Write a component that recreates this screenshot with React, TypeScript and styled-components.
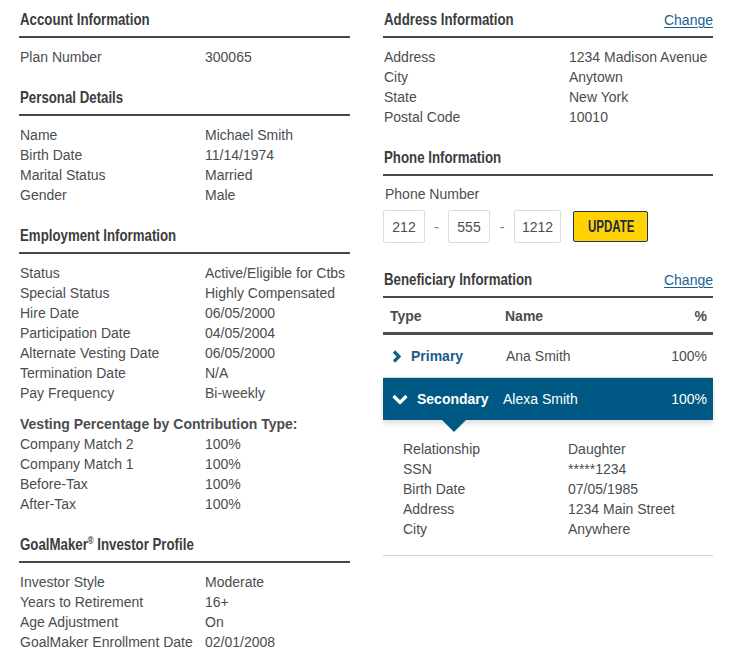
import React from "react";
import styled, { createGlobalStyle } from "styled-components";

const Global = createGlobalStyle`
  html, body { margin: 0; padding: 0; background: #fff; }
  body { font-family: "Liberation Sans", Arial, sans-serif; color: #444; }
  * { box-sizing: border-box; }
`;

const Page = styled.div`
  display: grid;
  grid-template-columns: 331px 330px;
  column-gap: 33px;
  padding: 10px 17px 0 19px;
  width: 730px;
  height: 667px;
  overflow: hidden;
`;

const Column = styled.div`
  display: flex;
  flex-direction: column;
`;

const Section = styled.section<{ $gap?: number }>`
  margin-bottom: ${(p) => (p.$gap ?? 21)}px;
`;

const HeadingBar = styled.div`
  display: flex;
  justify-content: space-between;
  align-items: baseline;
  padding-bottom: 6px;
  border-bottom: 2px solid #45494e;
`;

const Heading = styled.h2`
  margin: 0 0 0 1px;
  font-family: "Liberation Sans", Arial, sans-serif;
  font-weight: 700;
  font-size: 17px;
  line-height: 20px;
  color: #3a3d40;
  white-space: nowrap;
  sup {
    font-size: 10px;
    line-height: 0;
    vertical-align: 6px;
  }
`;

/* emulates the condensed bold face of the original */
const Narrow = styled.span<{ $scale?: number }>`
  display: inline-block;
  transform: scaleX(${(p) => p.$scale ?? 0.78});
  transform-origin: left center;
`;

const ChangeLink = styled.a`
  font-family: "Liberation Sans", Arial, sans-serif;
  font-size: 14px;
  line-height: 20px;
  color: #1d5f8e;
  text-decoration: underline;
  text-underline-offset: 2px;
  cursor: pointer;
`;

const Rows = styled.dl<{ $labelWidth?: number; $indent?: number }>`
  display: grid;
  grid-template-columns: ${(p) => p.$labelWidth ?? 185}px 1fr;
  margin: ${(p) => (p.$indent ? 0 : 9)}px 0 0 ${(p) => p.$indent ?? 1}px;
  font-size: 14px;
  line-height: 20px;
  color: #4a4d50;
  dt, dd { margin: 0; white-space: nowrap; }
`;

const SubTitle = styled.div`
  margin: 11px 0 0 1px;
  font-weight: 700;
  font-size: 14px;
  line-height: 20px;
  color: #4a4d50;
`;

const FieldLabel = styled.div`
  margin: 8px 0 0 2px;
  font-size: 14px;
  line-height: 20px;
  color: #4a4d50;
`;

const PhoneRow = styled.div`
  display: flex;
  align-items: center;
  margin-top: 6px;
`;

const PhoneBox = styled.div<{ $w: number }>`
  width: ${(p) => p.$w}px;
  height: 33px;
  border: 1px solid #dcdcdc;
  border-radius: 2px;
  display: flex;
  align-items: center;
  justify-content: center;
  font-size: 14px;
  color: #4a4d50;
`;

const Dash = styled.span<{ $w: number }>`
  width: ${(p) => p.$w}px;
  text-align: center;
  font-size: 14px;
  color: #777;
`;

const UpdateButton = styled.button`
  margin-left: 12px;
  width: 75px;
  height: 31px;
  background: #ffd200;
  border: 1px solid #1f3556;
  border-radius: 2px;
  font-family: "Liberation Sans", Arial, sans-serif;
  font-weight: 700;
  font-size: 16px;
  color: #1c2b48;
  padding: 1px 0 0 14px;
  text-align: left;
  white-space: nowrap;
`;

const Table = styled.div`
  display: flex;
  flex-direction: column;
`;

const TRow = styled.div<{ $variant: "head" | "plain" | "active" }>`
  position: relative;
  display: grid;
  grid-template-columns: 115px 1fr 60px;
  align-items: center;
  height: ${(p) => (p.$variant === "head" ? 37 : p.$variant === "plain" ? 43 : 42)}px;
  padding: ${(p) => (p.$variant === "head" ? "2px 6px 0 7px" : "0 6px 0 9px")};
  font-size: 14px;
  color: ${(p) => (p.$variant === "active" ? "#fff" : "#4a4d50")};
  background: ${(p) => (p.$variant === "active" ? "#005984" : "transparent")};
  border-bottom: ${(p) =>
    p.$variant === "head" ? "3px solid #4a4d51" : p.$variant === "plain" ? "1px solid #d4d4d4" : "none"};
  box-shadow: ${(p) => (p.$variant === "active" ? "0 4px 5px rgba(0,0,0,0.12)" : "none")};
  font-weight: ${(p) => (p.$variant === "head" ? 700 : 400)};
`;

const TypeCell = styled.div<{ $active?: boolean }>`
  display: flex;
  align-items: center;
  gap: ${(p) => (p.$active ? 9 : 10)}px;
  font-weight: 700;
  color: ${(p) => (p.$active ? "#fff" : "#1a5c8a")};
`;

const HeadCell = styled.div``;

const NameCell = styled.div<{ $shift?: number }>`
  margin-left: ${(p) => p.$shift ?? 0}px;
`;

const PctCell = styled.div`
  text-align: right;
`;

const Pointer = styled.div`
  position: absolute;
  left: 59px;
  top: 100%;
  width: 0;
  height: 0;
  border-left: 12px solid transparent;
  border-right: 12px solid transparent;
  border-top: 12px solid #005984;
  z-index: 2;
`;

const Details = styled.div`
  padding: 19px 0 16px 0;
  border-bottom: 1px solid #cfcfcf;
`;

const ChevronRight = () => (
  <svg width="9" height="13" viewBox="0 0 9 13">
    <polyline points="2,1.5 7,6.5 2,11.5" fill="none" stroke="#1a5c8a" strokeWidth="3.2" />
  </svg>
);

const ChevronDown = () => (
  <svg width="16" height="11" viewBox="0 0 16 11">
    <polyline points="1.5,2 8,8.5 14.5,2" fill="none" stroke="#fff" strokeWidth="3.2" />
  </svg>
);

type Pair = [string, string];

const RowList = ({ items, labelWidth, indent }: { items: Pair[]; labelWidth?: number; indent?: number }) => (
  <Rows $labelWidth={labelWidth} $indent={indent}>
    {items.map(([k, v]) => (
      <React.Fragment key={k}>
        <dt>{k}</dt>
        <dd>{v}</dd>
      </React.Fragment>
    ))}
  </Rows>
);

export default function App() {
  return (
    <>
      <Global />
      <Page>
        <Column>
          <Section>
            <HeadingBar>
              <Heading>
                <Narrow>Account Information</Narrow>
              </Heading>
            </HeadingBar>
            <RowList items={[["Plan Number", "300065"]]} />
          </Section>
          <Section>
            <HeadingBar>
              <Heading>
                <Narrow>Personal Details</Narrow>
              </Heading>
            </HeadingBar>
            <RowList
              items={[
                ["Name", "Michael Smith"],
                ["Birth Date", "11/14/1974"],
                ["Marital Status", "Married"],
                ["Gender", "Male"],
              ]}
            />
          </Section>
          <Section>
            <HeadingBar>
              <Heading>
                <Narrow>Employment Information</Narrow>
              </Heading>
            </HeadingBar>
            <RowList
              items={[
                ["Status", "Active/Eligible for Ctbs"],
                ["Special Status", "Highly Compensated"],
                ["Hire Date", "06/05/2000"],
                ["Participation Date", "04/05/2004"],
                ["Alternate Vesting Date", "06/05/2000"],
                ["Termination Date", "N/A"],
                ["Pay Frequency", "Bi-weekly"],
              ]}
            />
            <SubTitle>Vesting Percentage by Contribution Type:</SubTitle>
            <RowList
              indent={1}
              items={[
                ["Company Match 2", "100%"],
                ["Company Match 1", "100%"],
                ["Before-Tax", "100%"],
                ["After-Tax", "100%"],
              ]}
            />
          </Section>
          <Section>
            <HeadingBar>
              <Heading>
                <Narrow>
                  GoalMaker<sup>®</sup> Investor Profile
                </Narrow>
              </Heading>
            </HeadingBar>
            <RowList
              items={[
                ["Investor Style", "Moderate"],
                ["Years to Retirement", "16+"],
                ["Age Adjustment", "On"],
                ["GoalMaker Enrollment Date", "02/01/2008"],
              ]}
            />
          </Section>
        </Column>

        <Column>
          <Section>
            <HeadingBar>
              <Heading>
                <Narrow>Address Information</Narrow>
              </Heading>
              <ChangeLink>Change</ChangeLink>
            </HeadingBar>
            <RowList
              items={[
                ["Address", "1234 Madison Avenue"],
                ["City", "Anytown"],
                ["State", "New York"],
                ["Postal Code", "10010"],
              ]}
            />
          </Section>
          <Section $gap={27}>
            <HeadingBar>
              <Heading>
                <Narrow>Phone Information</Narrow>
              </Heading>
            </HeadingBar>
            <FieldLabel>Phone Number</FieldLabel>
            <PhoneRow>
              <PhoneBox $w={42}>212</PhoneBox>
              <Dash $w={23}>-</Dash>
              <PhoneBox $w={42}>555</PhoneBox>
              <Dash $w={24}>-</Dash>
              <PhoneBox $w={47}>1212</PhoneBox>
              <UpdateButton>
                <Narrow $scale={0.72}>UPDATE</Narrow>
              </UpdateButton>
            </PhoneRow>
          </Section>
          <Section>
            <HeadingBar>
              <Heading>
                <Narrow>Beneficiary Information</Narrow>
              </Heading>
              <ChangeLink>Change</ChangeLink>
            </HeadingBar>
            <Table>
              <TRow $variant="head">
                <HeadCell>Type</HeadCell>
                <HeadCell>Name</HeadCell>
                <PctCell>%</PctCell>
              </TRow>
              <TRow $variant="plain">
                <TypeCell>
                  <ChevronRight />
                  Primary
                </TypeCell>
                <NameCell $shift={-1}>Ana Smith</NameCell>
                <PctCell>100%</PctCell>
              </TRow>
              <TRow $variant="active">
                <TypeCell $active>
                  <ChevronDown />
                  Secondary
                </TypeCell>
                <NameCell $shift={-4}>Alexa Smith</NameCell>
                <PctCell>100%</PctCell>
                <Pointer />
              </TRow>
              <Details>
                <RowList
                  labelWidth={165}
                  indent={20}
                  items={[
                    ["Relationship", "Daughter"],
                    ["SSN", "*****1234"],
                    ["Birth Date", "07/05/1985"],
                    ["Address", "1234 Main Street"],
                    ["City", "Anywhere"],
                  ]}
                />
              </Details>
            </Table>
          </Section>
        </Column>
      </Page>
    </>
  );
}
